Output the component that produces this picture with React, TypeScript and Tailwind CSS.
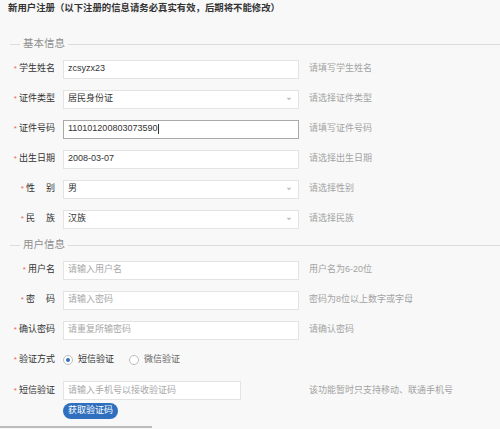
import React from "react";

const FONT = { fontFamily: '"Liberation Sans", "Noto Sans CJK SC", sans-serif' };

function Label({ text }: { text: React.ReactNode }) {
  return (
    <div className="w-[55px] shrink-0 flex items-center justify-end text-[9px] text-[#333]">
      <span className="text-[#e8665c] text-[8px] mr-[2px]">*</span>
      {text}
    </div>
  );
}

function Spaced({ a, b, gap }: { a: string; b: string; gap: string }) {
  return (
    <span className="inline-flex">
      <span>{a}</span>
      <span className={gap} />
      <span>{b}</span>
    </span>
  );
}

function Caret() {
  return (
    <svg width="6" height="4" viewBox="0 0 6 4" className="shrink-0">
      <path d="M0.5 0.8 L3 3.4 L5.5 0.8 Z" fill="#c4c4c4" />
    </svg>
  );
}

function Row({
  label,
  value,
  placeholder,
  hint,
  select,
  focused,
  width = "w-[236px]",
  hintGap = "ml-[10px]",
  rowClass = "h-[30px] items-center",
}: {
  label: React.ReactNode;
  value?: string;
  placeholder?: string;
  hint?: string;
  select?: boolean;
  focused?: boolean;
  width?: string;
  hintGap?: string;
  rowClass?: string;
}) {
  return (
    <div className={`flex ${rowClass}`}>
      <Label text={label} />
      <div
        className={`ml-[8px] ${width} h-[19px] shrink-0 bg-white border flex items-center pl-[4px] pr-[6px] text-[9px] ${
          focused ? "border-[#a9a9a9]" : "border-[#e3e3e3]"
        }`}
      >
        <span className={`flex-1 ${value ? "text-[#333]" : "text-[#a8a8a8]"}`}>
          {value ?? placeholder}
          {focused && <span className="inline-block w-px h-[10px] bg-[#333] align-middle ml-px" />}
        </span>
        {select && <Caret />}
      </div>
      {hint && <div className={`${hintGap} text-[9px] text-[#a3a3a3] whitespace-nowrap`}>{hint}</div>}
    </div>
  );
}

function SectionTitle({ text, className = "" }: { text: string; className?: string }) {
  return (
    <div className={`h-[20px] flex items-center ${className}`}>
      <div className="ml-[10px] w-[10px] h-px bg-[#dcdcdc]" />
      <span className="px-[3px] text-[10.5px] text-[#8e8e8e]">{text}</span>
      <div className="flex-1 h-px bg-[#dcdcdc]" />
    </div>
  );
}

function Radio({ checked, text }: { checked?: boolean; text: string }) {
  return (
    <div className="flex items-center">
      <div className="w-[10px] h-[10px] rounded-full border border-[#bdbdbd] bg-white flex items-center justify-center">
        {checked && <div className="w-[4px] h-[4px] rounded-full bg-[#2f6fbd]" />}
      </div>
      <span className={`ml-[5px] text-[9px] ${checked ? "text-[#333]" : "text-[#666]"}`}>{text}</span>
    </div>
  );
}

export default function App() {
  return (
    <div className="w-[500px] h-[429px] bg-[#f8f8f8] overflow-hidden" style={FONT}>
      <div className="h-[16px] pl-[8px] leading-[16px] text-[9.4px] font-bold text-[#333] whitespace-nowrap">
        新用户注册（以下注册的信息请务必真实有效，后期将不能修改）
      </div>

      <SectionTitle text="基本信息" className="mt-[18px]" />
      <Row label="学生姓名" value="zcsyzx23" hint="请填写学生姓名" />
      <Row label="证件类型" value="居民身份证" hint="请选择证件类型" select />
      <Row label="证件号码" value="110101200803073590" hint="请填写证件号码" focused />
      <Row label="出生日期" value="2008-03-07" hint="请选择出生日期" />
      <Row label={<Spaced a="性" b="别" gap="w-[11px]" />} value="男" hint="请选择性别" select />
      <Row label={<Spaced a="民" b="族" gap="w-[11px]" />} value="汉族" hint="请选择民族" select />

      <SectionTitle text="用户信息" className="mt-[1px]" />
      <Row label="用户名" placeholder="请输入用户名" hint="用户名为6-20位" />
      <Row label={<Spaced a="密" b="码" gap="w-[11px]" />} placeholder="请输入密码" hint="密码为8位以上数字或字母" />
      <Row label="确认密码" placeholder="请重复所输密码" hint="请确认密码" />

      <div className="flex h-[30px] items-center">
        <Label text="验证方式" />
        <div className="ml-[8px] flex items-center gap-[15px]">
          <Radio checked text="短信验证" />
          <Radio text="微信验证" />
        </div>
      </div>

      <Row
        label="短信验证"
        placeholder="请输入手机号以接收验证码"
        hint="该功能暂时只支持移动、联通手机号"
        width="w-[178px]"
        hintGap="ml-[68px]"
        rowClass="mt-[6px] h-[19px] items-center"
      />
      <div className="mt-[3px] ml-[63px] w-[55px] h-[16px] rounded-full bg-[#2f6fbd] text-white text-[9px] flex items-center justify-center">
        获取验证码
      </div>
      <div className="mt-[7px] w-[152px] h-[2px] bg-[#bdbdbd]" />
    </div>
  );
}
